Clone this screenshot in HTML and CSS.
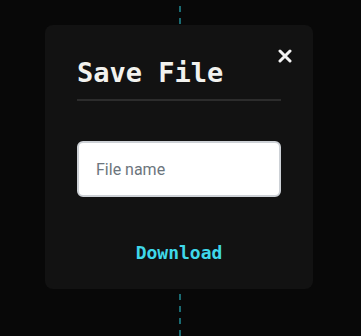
FILE: index.html
```html
<!doctype html>
<html lang="en">

<head>
    <meta charset="utf-8">
    <title>Save File</title>
    <meta name="viewport" content="width=device-width,initial-scale=1">
    <link rel="stylesheet" href="styles.css">
</head>

<body>
    <div class="save-dialog">
        <button class="save-dialog-close" type="button" aria-label="Close">
            <svg width="14" height="14" viewBox="0 0 14 14">
                <path d="M2 2 L12 12 M12 2 L2 12" stroke="#f4f4f4" stroke-width="3" stroke-linecap="round" fill="none"/>
            </svg>
        </button>
        <h1 class="save-dialog-title">Save File</h1>
        <input class="save-dialog-input" type="text" placeholder="File name">
        <div class="save-dialog-actions">
            <button class="save-dialog-download" type="button">Download</button>
        </div>
    </div>
</body>

</html>
```

FILE: styles.css
```css
html,
body {
    margin: 0;
    height: 100%;
}

body {
    background-color: #080808;
    background-image: linear-gradient(to bottom, #1a6a71 50%, transparent 50%);
    background-size: 2px 12px;
    background-position: 179px 6px;
    background-repeat: repeat-y;
    overflow: hidden;
}

.save-dialog {
    position: relative;
    box-sizing: border-box;
    width: 268px;
    height: 264px;
    margin: 25px 0 0 45px;
    padding: 0 32px;
    background-color: #121212;
    border-radius: 8px;
}

.save-dialog-close {
    position: absolute;
    top: 24px;
    right: 21px;
    width: 14px;
    height: 14px;
    padding: 0;
    border: 0;
    background: none;
    cursor: pointer;
}

.save-dialog-close svg {
    display: block;
}

.save-dialog-title {
    margin: 0;
    padding: 32px 0 10px;
    border-bottom: 2px solid #2c2c2c;
    font-family: "DejaVu Sans Mono", monospace;
    font-size: 27px;
    font-weight: bold;
    line-height: 32px;
    color: #f2f2ee;
}

.save-dialog-input {
    display: block;
    box-sizing: border-box;
    width: 204px;
    height: 56px;
    margin-top: 40px;
    padding: 0 17px;
    border: 2px solid #cdd1d6;
    border-radius: 6px;
    background-color: #ffffff;
    font-family: Roboto, "Liberation Sans", sans-serif;
    font-size: 16px;
    color: #212529;
    outline: none;
}

.save-dialog-input::placeholder {
    color: #6c757d;
}

.save-dialog-actions {
    display: flex;
    justify-content: center;
    margin-top: 45px;
}

.save-dialog-download {
    padding: 0;
    border: 0;
    background: none;
    font-family: "DejaVu Sans Mono", monospace;
    font-size: 18px;
    font-weight: bold;
    line-height: 22px;
    color: #3fd8ea;
    cursor: pointer;
}
```
